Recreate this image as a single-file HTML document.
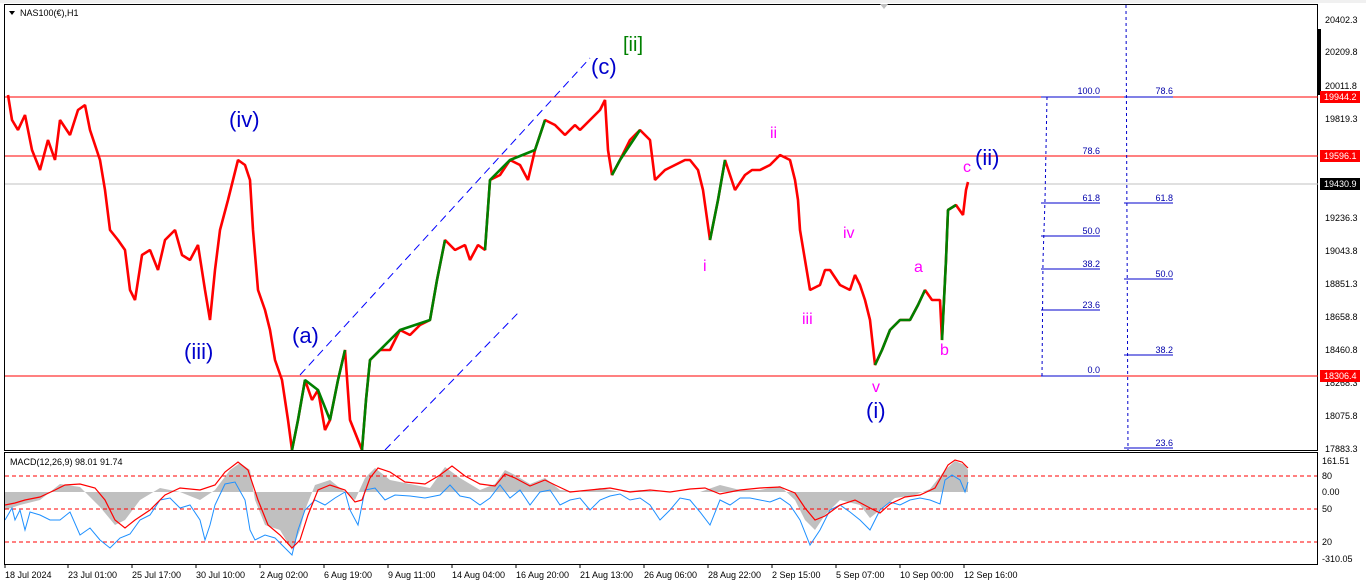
<!DOCTYPE html>
<html><head><meta charset="utf-8"><style>
html,body{margin:0;padding:0;background:#fff;width:1366px;height:588px;overflow:hidden}
svg{display:block}
text{font-family:"Liberation Sans",sans-serif}
</style></head><body>
<svg width="1366" height="588" viewBox="0 0 1366 588" xmlns="http://www.w3.org/2000/svg">
<rect x="0" y="0" width="1366" height="588" fill="#fff"/>
<rect x="0" y="0" width="1366" height="3" fill="#f0f0f0"/>
<rect x="4.5" y="4.5" width="1313" height="446" fill="none" stroke="#000"/>
<rect x="4.5" y="452.5" width="1313" height="112" fill="none" stroke="#000"/>
<polygon points="880,4 888,4 884,9" fill="#c0c0c0"/>
<rect x="1318" y="29" width="3" height="66" fill="#000"/>
<line x1="5" y1="97" x2="1318" y2="97" stroke="#f00"/>
<line x1="5" y1="156" x2="1318" y2="156" stroke="#f00"/>
<line x1="5" y1="184" x2="1318" y2="184" stroke="#c0c0c0"/>
<line x1="5" y1="376" x2="1318" y2="376" stroke="#f00"/>
<line x1="300" y1="375" x2="590" y2="58" stroke="#00f" stroke-dasharray="8,5"/>
<line x1="385" y1="450" x2="518" y2="313" stroke="#00f" stroke-dasharray="8,5"/>
<g stroke="#00c" fill="none">
<polyline points="1047,97 1045,200 1043,260 1042,376" stroke-dasharray="3,3"/>
<line x1="1041" y1="97" x2="1100" y2="97"/>
<line x1="1041" y1="203" x2="1100" y2="203"/>
<line x1="1041" y1="236" x2="1100" y2="236"/>
<line x1="1041" y1="269" x2="1100" y2="269"/>
<line x1="1041" y1="310" x2="1100" y2="310"/>
<line x1="1041" y1="376" x2="1100" y2="376"/>
<line x1="1126" y1="5" x2="1128" y2="450" stroke-dasharray="3,3"/>
<line x1="1124" y1="97" x2="1173" y2="97"/>
<line x1="1124" y1="203" x2="1173" y2="203"/>
<line x1="1124" y1="279" x2="1173" y2="279"/>
<line x1="1124" y1="355" x2="1173" y2="355"/>
<line x1="1124" y1="448" x2="1173" y2="448"/>
</g>
<g font-size="9" fill="#00a" text-anchor="end">
<text x="1100" y="94">100.0</text><text x="1100" y="154">78.6</text>
<text x="1100" y="201">61.8</text><text x="1100" y="234">50.0</text>
<text x="1100" y="267">38.2</text><text x="1100" y="308">23.6</text>
<text x="1100" y="373">0.0</text>
<text x="1173" y="94">78.6</text><text x="1173" y="201">61.8</text>
<text x="1173" y="277">50.0</text><text x="1173" y="353">38.2</text>
<text x="1173" y="446">23.6</text>
</g>
<clipPath id="c1"><rect x="5" y="5" width="1312" height="445"/></clipPath>
<g clip-path="url(#c1)" fill="none" stroke-width="2.6" stroke-linejoin="bevel">
<polyline stroke="#f00" points="8,95 12,120 18,130 25,115 32,150 40,170 48,140 55,160 60,120 70,135 78,110 85,105 90,130 100,160 105,190 110,230 118,240 125,250 130,290 135,300 142,255 150,250 158,270 165,240 175,230 182,255 190,260 198,245 205,290 210,320 215,270 220,230 228,200 238,160 245,165 250,180 253,230 258,290 265,310 270,330 275,360 282,380 288,420 292,450 298,420 305,380 312,400 318,390 325,430 330,420 338,380 345,350 350,420 358,440 362,450 366,400 370,360 380,350 390,350 400,330 410,335 420,325 430,320 437,280 445,240 455,250 465,245 470,260 478,245 485,250 490,180 500,175 510,160 520,165 528,180 535,150 545,120 555,125 565,135 575,125 580,130 590,120 600,110 605,100 608,150 612,175 620,160 630,140 640,130 650,140 655,180 665,170 675,165 685,160 690,160 698,170 703,190 710,240 718,200 725,160 735,190 745,175 752,170 760,170 770,165 780,155 790,160 795,180 798,200 800,230 805,260 810,290 820,285 825,270 830,270 840,285 850,290 855,275 860,285 865,300 870,320 875,365 882,350 890,330 900,320 910,320 918,305 925,290 932,300 940,300 942,340 946,260 948,210 956,205 963,215 966,190 968,182"/>
<polyline stroke="#008000" points="292,450 298,420 305,380 318,390 330,420 338,380 345,350" />
<polyline stroke="#008000" points="362,450 366,400 370,360 400,330 430,320 437,280 445,240" />
<polyline stroke="#008000" points="485,250 490,180 510,160 535,150 545,120" />
<polyline stroke="#008000" points="612,175 620,160 640,130" />
<polyline stroke="#008000" points="710,240 718,200 725,160" />
<polyline stroke="#008000" points="875,365 882,350 890,330 900,320 910,320 918,305 925,290" />
<polyline stroke="#008000" points="942,340 946,260 948,210 956,205" />
</g>
<g font-size="22" fill="#00c">
<text x="229" y="127">(iv)</text>
<text x="184" y="359">(iii)</text>
<text x="292" y="343">(a)</text>
<text x="591" y="74">(c)</text>
<text x="975" y="165">(ii)</text>
<text x="866" y="418">(i)</text>
</g>
<text x="623" y="51" font-size="20" fill="#008000">[ii]</text>
<g font-size="16" fill="#f0f">
<text x="770" y="138">ii</text>
<text x="703" y="271">i</text>
<text x="843" y="238">iv</text>
<text x="802" y="324">iii</text>
<text x="872" y="392">v</text>
<text x="914" y="272">a</text>
<text x="940" y="355">b</text>
<text x="963" y="172">c</text>
</g>
<text x="20" y="16" font-size="9" fill="#000">NAS100(€),H1</text>
<polygon points="9,11 15,11 12,15" fill="#000"/>
<g font-size="9" fill="#000">
<text x="1325" y="23">20402.3</text><text x="1325" y="55">20209.8</text>
<text x="1325" y="89">20011.8</text><text x="1325" y="122">19819.3</text>
<text x="1325" y="221">19236.3</text><text x="1325" y="254">19043.8</text>
<text x="1325" y="287">18851.3</text><text x="1325" y="320">18658.8</text>
<text x="1325" y="353">18460.8</text><text x="1325" y="386">18268.3</text>
<text x="1325" y="419">18075.8</text><text x="1325" y="452">17883.3</text>
</g>
<rect x="1320" y="91" width="40" height="12" fill="#f00"/><text x="1324" y="100" font-size="9" fill="#fff">19944.2</text>
<rect x="1320" y="150" width="40" height="12" fill="#f00"/><text x="1324" y="159" font-size="9" fill="#fff">19596.1</text>
<rect x="1320" y="178" width="40" height="12" fill="#000"/><text x="1324" y="187" font-size="9" fill="#fff">19430.9</text>
<rect x="1320" y="370" width="40" height="12" fill="#f00"/><text x="1324" y="379" font-size="9" fill="#fff">18306.4</text>
<clipPath id="c2"><rect x="5" y="453" width="1312" height="111"/></clipPath>
<g clip-path="url(#c2)">
<path fill="#c0c0c0" d="M5,492 L5,510 20,505 40,500 60,484 80,487 100,507 115,525 125,520 140,500 160,488 180,492 200,500 215,490 230,470 240,463 250,470 255,500 265,525 280,530 292,550 300,530 305,510 315,485 330,480 345,492 355,500 365,478 375,468 390,480 410,484 430,488 445,467 460,478 480,490 495,484 505,470 515,475 530,484 545,478 560,490 580,492 600,488 610,490 620,492 640,490 660,492 700,492 720,485 740,490 760,490 780,486 795,500 805,520 815,530 825,515 840,500 860,505 870,518 880,510 895,498 915,495 930,489 945,470 955,461 965,465 968,470 968,492 Z"/>
<line x1="5" y1="476" x2="1317" y2="476" stroke="#f00" stroke-dasharray="4,3"/>
<line x1="5" y1="509" x2="1317" y2="509" stroke="#f00" stroke-dasharray="4,3"/>
<line x1="5" y1="542" x2="1317" y2="542" stroke="#f00" stroke-dasharray="4,3"/>
<polyline fill="none" stroke="#1e90ff" stroke-width="1" points="5,520 12,508 15,520 20,510 25,530 30,512 40,515 50,520 60,520 70,512 80,535 90,528 100,540 110,548 120,538 130,534 140,520 150,515 160,500 170,498 180,508 190,505 200,520 205,540 210,525 215,505 225,484 235,482 245,500 250,530 255,540 265,535 275,538 285,548 292,555 298,530 305,510 315,500 325,505 335,498 345,492 350,510 358,525 365,490 375,488 385,500 395,495 410,496 425,498 440,495 450,485 460,496 470,498 480,505 490,498 500,485 510,498 520,490 530,505 540,492 550,490 560,505 570,500 580,498 590,510 600,500 610,496 620,494 630,500 640,498 650,505 660,520 670,510 680,498 690,500 700,512 710,525 720,500 730,505 740,498 750,498 760,500 770,502 780,498 790,505 800,520 810,545 820,530 830,510 840,505 850,512 860,520 870,530 880,510 890,502 900,505 910,500 920,498 930,500 940,504 945,480 952,475 960,480 965,492 968,482"/>
<polyline fill="none" stroke="#f00" stroke-width="1.2" points="5,505 15,503 25,500 40,497 55,490 65,485 80,484 95,488 105,500 115,520 125,528 135,520 150,510 165,495 180,488 200,490 215,485 225,472 238,462 248,470 258,500 268,525 280,535 292,548 300,540 308,515 318,490 330,485 345,490 355,502 362,500 370,478 378,468 390,472 405,482 425,484 440,475 452,466 465,476 480,484 495,486 505,474 515,478 530,486 545,480 555,485 570,492 590,490 610,488 630,492 650,490 670,492 690,489 705,488 720,494 740,490 760,488 780,487 795,493 805,508 815,520 825,516 840,505 855,500 870,508 880,513 890,504 905,497 920,495 935,488 948,465 955,460 962,462 968,468"/>
</g>
<text x="10" y="465" font-size="9" fill="#000">MACD(12,26,9) 98.01 91.74</text>
<g font-size="9" fill="#000">
<text x="1322" y="464">161.51</text><text x="1322" y="479">80</text>
<text x="1322" y="495">0.00</text><text x="1322" y="512">50</text>
<text x="1322" y="545">20</text><text x="1322" y="562">-310.05</text>
</g>
<g font-size="9" fill="#000">
<text x="5" y="578">18 Jul 2024</text><text x="68" y="578">23 Jul 01:00</text>
<text x="132" y="578">25 Jul 17:00</text><text x="196" y="578">30 Jul 10:00</text>
<text x="260" y="578">2 Aug 02:00</text><text x="324" y="578">6 Aug 19:00</text>
<text x="388" y="578">9 Aug 11:00</text><text x="452" y="578">14 Aug 04:00</text>
<text x="516" y="578">16 Aug 20:00</text><text x="580" y="578">21 Aug 13:00</text>
<text x="644" y="578">26 Aug 06:00</text><text x="708" y="578">28 Aug 22:00</text>
<text x="772" y="578">2 Sep 15:00</text><text x="836" y="578">5 Sep 07:00</text>
<text x="900" y="578">10 Sep 00:00</text><text x="964" y="578">12 Sep 16:00</text>
</g>
<g stroke="#000"><line x1="5" y1="565" x2="5" y2="568"/><line x1="68" y1="565" x2="68" y2="568"/><line x1="132" y1="565" x2="132" y2="568"/><line x1="196" y1="565" x2="196" y2="568"/><line x1="260" y1="565" x2="260" y2="568"/><line x1="324" y1="565" x2="324" y2="568"/><line x1="388" y1="565" x2="388" y2="568"/><line x1="452" y1="565" x2="452" y2="568"/><line x1="516" y1="565" x2="516" y2="568"/><line x1="580" y1="565" x2="580" y2="568"/><line x1="644" y1="565" x2="644" y2="568"/><line x1="708" y1="565" x2="708" y2="568"/><line x1="772" y1="565" x2="772" y2="568"/><line x1="836" y1="565" x2="836" y2="568"/><line x1="900" y1="565" x2="900" y2="568"/><line x1="964" y1="565" x2="964" y2="568"/></g>
</svg>
</body></html>
